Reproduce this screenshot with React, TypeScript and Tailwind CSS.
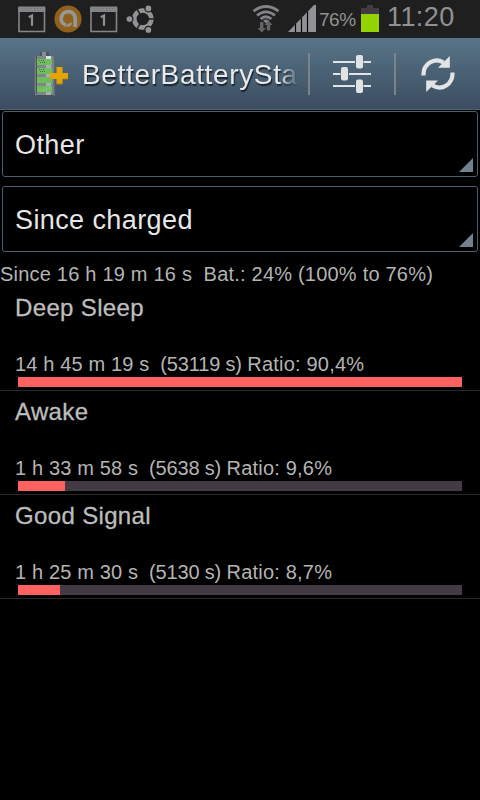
import React from 'react';

const stats = [
  { name: 'Deep Sleep', time: '14 h 45 m 19 s', seconds: 53119, ratio: '90,4%' },
  { name: 'Awake', time: '1 h 33 m 58 s', seconds: 5638, ratio: '9,6%' },
  { name: 'Good Signal', time: '1 h 25 m 30 s', seconds: 5130, ratio: '8,7%' },
];

const maxSeconds = Math.max(...stats.map((s) => s.seconds));

const CalendarIcon: React.FC = () => (
  <svg width="28" height="27" viewBox="0 0 28 27" fill="none">
    <path d="M1 2v23.500h25.500V2" stroke="#85868a" strokeWidth="1.600" />
    <path d="M.2.500h27V6H.2z" fill="#85868a" />
    <path d="M4 2.500h20M5 4.500h18" stroke="#6b6b6d" strokeWidth="1" strokeDasharray="1 2" />
    <path d="M10.800 11.200l3.200-1.700v10.200" stroke="#8e8f93" strokeWidth="2.200" />
  </svg>
);

const AvastIcon: React.FC = () => (
  <svg width="28" height="28" viewBox="0 0 28 28" fill="none">
    <circle cx="14" cy="14" r="13.600" fill="#8f611b" />
    <path d="M12 20.300A7 7 0 1 1 21.200 13.500V22" stroke="#96979b" strokeWidth="3.800" />
    <path d="M12.500 20.300c2 .4 4-.6 4.500-2.500" stroke="#96979b" strokeWidth="2.400" />
  </svg>
);

const UbuntuIcon: React.FC = () => (
  <svg width="30" height="28" viewBox="0 0 30 28" fill="none">
    <circle cx="16.800" cy="14" r="8.500" stroke="#929397" strokeWidth="4.600" />
    <path d="M16.800 14H30M16.800 14L10.300 2.800M16.800 14L10.300 25.200" stroke="#1f1f1f" strokeWidth="1.500" />
    <g fill="#929397" stroke="#1f1f1f" strokeWidth="1.300">
      <circle cx="22.400" cy="3.400" r="3.500" />
      <circle cx="22.400" cy="24.900" r="3.500" />
      <circle cx="3.400" cy="14" r="3.500" />
    </g>
  </svg>
);

const WifiIcon: React.FC = () => (
  <svg width="28" height="28" viewBox="0 0 28 28" fill="none">
    <g stroke="#838488" strokeWidth="2.800">
      <path d="M1.500 6.200Q14-3.200 26.500 6.200" />
      <path d="M5 10.400Q14 3.400 23 10.400" />
      <path d="M8.600 14Q14 9.600 19.400 14" />
    </g>
    <path d="M11 15.500q3-2 6 0l-3 3z" fill="#838488" />
    <path d="M8 17h3.400v6H14l-4.300 4.500L5.500 23H8z" fill="#646467" />
    <path d="M14.800 25.500h3.400V20h2.300l-4-4.500-4 4.500h2.300z" fill="#646467" />
  </svg>
);

const SignalIcon: React.FC = () => (
  <svg width="28" height="27" viewBox="0 0 28 27">
    <path d="M0 27L26 0h2v27z" fill="#919296" />
    <path d="M7.500 19v8M13.500 13v14M19.500 6.500v20.500" stroke="#070707" strokeWidth="1.200" />
  </svg>
);

const StatusBattery: React.FC = () => (
  <svg width="18" height="27" viewBox="0 0 18 27" shapeRendering="crispEdges">
    <path d="M6 0h6v3h6v6H0V3h6z" fill="#433b43" />
    <path d="M0 9h18v18H0z" fill="#93d300" />
  </svg>
);

const AppIcon: React.FC = () => (
  <svg width="36" height="46" viewBox="0 0 36 46">
    <path d="M6 0h9v5H6z" fill="#4c5256" />
    <path d="M8 0h4v4H8z" fill="#8a9194" />
    <rect x="1" y="4" width="19" height="40" rx="2" fill="#7d878b" />
    <path d="M.5 4v36M20.500 4v40" stroke="#5d676d" strokeWidth="1.500" />
    <path d="M2.500 4v38" stroke="#4b555b" strokeWidth="1" />
    <path d="M12 4h5v39h-5z" fill="#a9b0b2" />
    <path d="M12 4h5v3h-5z" fill="#dde0e0" />
    <path d="M2 43h17v2H2z" fill="#4a4f53" />
    <path d="M3 7h15v6H3zM3 16h15v6H3zM3 25h15v6H3zM3 34h15v6H3z" fill="#6fbd5d" />
    <path d="M5 8.500h6M6 10.500h5M5 17.500h6M6 19.500h5" stroke="#37752f" strokeDasharray="1 1" />
    <path d="M12 36h5M9 38h6" stroke="#b5dcae" strokeDasharray="1 2" />
    <path d="M22.500 15h6v6H34v6h-5.500v5h-6v-5H16v-6h6.500z" fill="#e5a500" />
    <path d="M34 27h-5.500v5h-6" fill="none" stroke="#a77d1b" strokeWidth="1" />
  </svg>
);

const SlidersIcon: React.FC = () => (
  <svg width="38" height="38" viewBox="0 0 38 38">
    <path d="M0 7h22M30.500 7H38M0 19h7.500M16 19h22M0 31h22M30.500 31H38" stroke="#e1e3e5" strokeWidth="2" />
    <rect x="23" y="0" width="7" height="13.500" rx="2" fill="#e1e2e4" />
    <rect x="8" y="12" width="7" height="13.500" rx="2" fill="#e1e2e4" />
    <rect x="23" y="24.500" width="7" height="13.500" rx="2" fill="#e1e2e4" />
  </svg>
);

const RefreshIcon: React.FC = () => (
  <svg width="34" height="36" viewBox="0 0 34 36">
    <path d="M2.500 19.500C2 8 13 .8 22.500 6.500" fill="none" stroke="#e3e4e6" strokeWidth="4.200" />
    <path d="M28.800 0v11.800H17z" fill="#e3e4e6" />
    <path d="M31.500 16.500C32 28 21 35.200 11.500 29.500" fill="none" stroke="#e3e4e6" strokeWidth="4.200" />
    <path d="M5.200 36V24.500H17z" fill="#e3e4e6" />
  </svg>
);

const StatusBar: React.FC = () => (
  <div className="flex h-[38px] items-start bg-[#1f1f1f] pt-[5px] text-[#909194]">
    <div className="ml-[18px] pt-px"><CalendarIcon /></div>
    <div className="ml-2"><AvastIcon /></div>
    <div className="ml-2 pt-px"><CalendarIcon /></div>
    <div className="ml-2"><UbuntuIcon /></div>
    <div className="ml-24"><WifiIcon /></div>
    <div className="ml-2"><SignalIcon /></div>
    <span className="ml-[3px] w-[42px] pt-[5px] text-[19px] leading-5 tracking-[-0.5px]">76%</span>
    <StatusBattery />
    <span className="ml-2 text-[27px] leading-[25px] tracking-[0.4px]">11:20</span>
  </div>
);

const Divider: React.FC = () => <div className="h-[42px] w-0.5 bg-[#7b8389]" />;

const ActionBar: React.FC = () => (
  <div className="flex h-[72px] items-center border-b border-[#4c6173] bg-linear-to-b from-[#587488] to-[#3c4d60]">
    <div className="ml-[34px] w-12 pt-0.5"><AppIcon /></div>
    <div className="w-[215px] whitespace-nowrap pt-0.5 text-[28px] leading-9 tracking-[0.65px] text-[#e8e9ea] [mask-image:linear-gradient(to_right,black_196px,transparent_217px)] [text-shadow:1px_2px_1px_#1c252e]">
      BetterBatterySta
    </div>
    <div className="ml-[11px]"><Divider /></div>
    <div className="ml-[23px]"><SlidersIcon /></div>
    <div className="ml-[23px]"><Divider /></div>
    <div className="ml-[25px]"><RefreshIcon /></div>
  </div>
);

const Spinner: React.FC<{ label: string }> = ({ label }) => (
  <div className="mx-[2px] flex h-[66px] items-end justify-between rounded-[3px] border border-[#48606f] pr-1 pb-1">
    <span className="self-center pl-3 pt-[5px] text-[27px] leading-8 tracking-[0.4px] text-[#e6e6e6]">{label}</span>
    <svg width="14" height="14" viewBox="0 0 14 14">
      <path d="M14 0v14H0z" fill="#71818d" />
    </svg>
  </div>
);

const App: React.FC = () => {
  return (
    <div className="h-[800px] w-[480px] overflow-hidden bg-black font-['Liberation_Sans',Arial,sans-serif]">
      <StatusBar />
      <ActionBar />

      <div className="flex flex-col gap-[9px] pt-px">
        <Spinner label="Other" />
        <Spinner label="Since charged" />
      </div>

      <p className="mt-2.5 h-[25px] whitespace-pre text-[20px] leading-6 tracking-[0.21px] text-[#b4b4b4]">
        {'Since 16 h 19 m 16 s  Bat.: 24% (100% to 76%)'}
      </p>

      {stats.map((stat) => (
        <div key={stat.name} className="h-[104px] border-b border-[#282828] pt-[7px]">
          <h2 className="pl-[15px] text-[24px] leading-7 tracking-[0.35px] text-[#bdbdbd] [-webkit-text-stroke:0.3px_#bdbdbd]">{stat.name}</h2>
          <p className="mt-[30px] whitespace-pre pl-[15px] text-[20px] leading-6 text-[#b4b4b4]">
            <span className="tracking-[0.15px]">{stat.time}</span>
            <span className="tracking-[-0.15px]">{`  (${stat.seconds} s) `}</span>
            <span className="tracking-[0.2px]">{`Ratio: ${stat.ratio}`}</span>
          </p>
          <div className="mx-[18px] mt-px h-2.5 bg-[#433b43]">
            <div
              className="h-full bg-[#ff6161]"
              style={{ width: Math.floor((444 * stat.seconds) / maxSeconds) }}
            />
          </div>
        </div>
      ))}
    </div>
  );
};

export default App;
